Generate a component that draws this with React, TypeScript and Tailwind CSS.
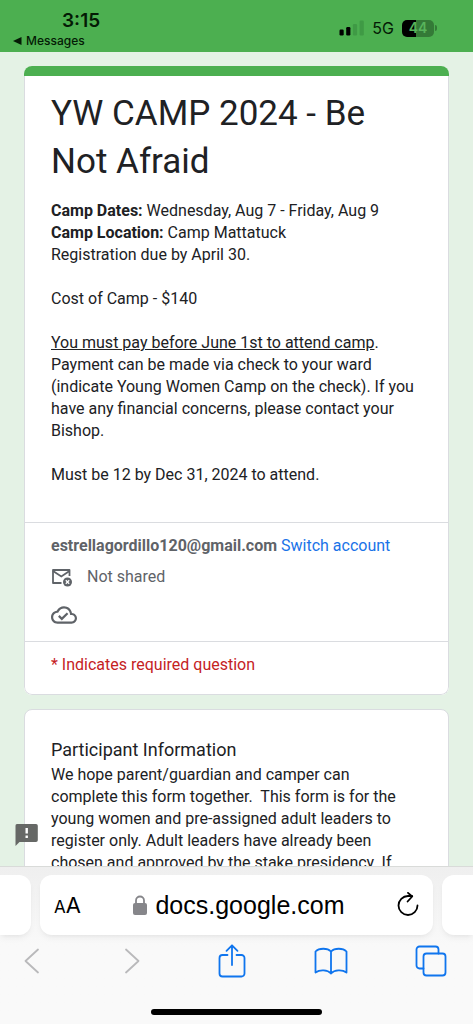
import type { ReactNode } from "react";

/* ==================== STATUS BAR ==================== */
const StatusBar = () => (
  <header className="flex h-[52px] shrink-0 items-start justify-between bg-[#4caf50] px-3 pt-[9px] font-['Inter','Liberation_Sans',sans-serif] text-[#041a05]">
    <div>
      <p className="pl-[50px] text-[19px] leading-6 font-semibold">3:15</p>
      <a href="#messages" className="flex items-center gap-1 text-xs leading-4 font-medium">
        <svg viewBox="0 0 10 10" className="size-2.5" fill="currentColor">
          <path d="M9.5 1v8L1 5z" />
        </svg>
        Messages
      </a>
    </div>

    <div className="flex items-center gap-2 pt-[9px] pr-6">
      <svg viewBox="0 0 25 16" className="h-4 w-[25px]">
        <rect x="0.500" y="9.5" width="4.2" height="6" rx="1.2" fill="#000" />
        <rect x="7.2" y="7" width="4.2" height="8.5" rx="1.2" fill="#000" />
        <rect x="13.9" y="4" width="4.2" height="11.5" rx="1.2" fill="#3f9a45" />
        <rect x="20.6" y="0.5" width="4.2" height="15" rx="1.2" fill="#3f9a45" />
      </svg>
      <span className="text-base leading-5">5G</span>
      <div className="flex items-center">
        <span className="flex h-[17px] w-8 items-center justify-center rounded-[5px] bg-linear-to-r from-black from-45% to-[#347a37] to-45% text-sm leading-4 font-semibold text-[#58b45c]">
          44
        </span>
        <span className="ml-px h-1.5 w-0.5 rounded-r-full bg-[#347a37]" />
      </div>
    </div>
  </header>
);

/* ==================== FORM ==================== */
const Card = ({ children }: { children: ReactNode }) => (
  <section className="overflow-hidden rounded-lg border border-[#dadce0] bg-white">{children}</section>
);

const FormHeader = () => (
  <section className="overflow-hidden rounded-lg bg-white">
    <div className="h-2.5 bg-[#4caf50]" />
    <div className="rounded-b-lg border border-t-0 border-[#dadce0]">
      <div className="px-[26px] pt-3.5 pb-9">
        <h1 className="text-[35px] leading-12">YW CAMP 2024 - Be Not Afraid</h1>
        <div className="mt-3.5 text-base leading-[22px]">
          <p>
            <b>Camp Dates:</b> Wednesday, Aug 7 - Friday, Aug 9
          </p>
          <p>
            <b>Camp Location:</b> Camp Mattatuck
          </p>
          <p>Registration due by April 30.</p>
          <br />
          <p>Cost of Camp - $140</p>
          <br />
          <p>
            <u>You must pay before June 1st to attend camp</u>.
            <br />
            Payment can be made via check to your ward (indicate Young Women Camp on the check). If you
            have any financial concerns, please contact your Bishop.
          </p>
          <br />
          <p>Must be 12 by Dec 31, 2024 to attend.</p>
        </div>
      </div>

      <div className="border-t border-[#dadce0] px-[26px] py-3 text-base leading-[22px] text-[#5f6368]">
        <p>
          <b>estrellagordillo120@gmail.com</b>{" "}
          <a href="#switch" className="text-[#1a73e8]">
            Switch account
          </a>
        </p>
        <div className="mt-[9px] flex items-center gap-3.5">
          <svg viewBox="0 0 22 20" className="h-5 w-[22px]" fill="none" stroke="currentColor" strokeWidth="1.800">
            <path d="M18.500 9V3H2v13h8.500" strokeLinejoin="round" />
            <path d="M2 4l8.300 5.500L18.500 4" />
            <circle cx="16.500" cy="15" r="4.500" fill="currentColor" stroke="none" />
            <path d="M14.800 13.300l3.400 3.400M18.200 13.300l-3.400 3.400" stroke="#fff" strokeWidth="1.300" />
          </svg>
          <span>Not shared</span>
        </div>
        <svg viewBox="0 0 24 24" className="mt-3.5 mb-px size-[26px]" fill="currentColor">
          <path d="M19.35 10.04C18.67 6.59 15.64 4 12 4 9.110 4 6.600 5.640 5.350 8.040 2.340 8.360 0 10.910 0 14c0 3.310 2.690 6 6 6h13c2.760 0 5-2.240 5-5 0-2.640-2.050-4.780-4.650-4.960zM19 18H6c-2.210 0-4-1.790-4-4 0-2.050 1.530-3.760 3.560-3.970l1.070-.11.5-.95C8.080 7.140 9.940 6 12 6c2.620 0 4.880 1.860 5.390 4.430l.3 1.500 1.530.11c1.560.1 2.780 1.410 2.780 2.960 0 1.650-1.350 3-3 3zm-9-3.820l-2.090-2.090L6.500 13.500 10 17l6.010-6.010-1.410-1.410z" />
        </svg>
      </div>

      <p className="border-t border-[#dadce0] px-[26px] pt-3 pb-[18px] text-base leading-[22px] text-[#c5221f]">
        * Indicates required question
      </p>
    </div>
  </section>
);

const ParticipantInfo = () => (
  <Card>
    <div className="py-[26px] pr-9 pl-[26px]">
      <h2 className="text-lg leading-7">Participant Information</h2>
      <p className="text-base leading-[22px]">
        We hope parent/guardian and camper can complete this form together.&nbsp; This form is for the
        young women and pre-assigned adult leaders to register only. Adult leaders have already been
        chosen and approved by the stake presidency. If
      </p>
    </div>
  </Card>
);

/* ==================== BROWSER BAR ==================== */
const iconProps = { fill: "none", stroke: "currentColor", strokeLinecap: "round", strokeLinejoin: "round" } as const;

const BrowserBar = () => (
  <footer className="shrink-0 overflow-hidden border-t border-[#d9dbd9] bg-linear-to-b from-[#efefef] to-[#f9f9f9] to-50% pt-2 pb-[9px] font-['Inter','Liberation_Sans',sans-serif]">
    <div className="flex h-[60px] gap-[9px]">
      <div className="w-[31px] shrink-0 rounded-r-xl bg-white shadow-md shadow-black/5" />
      <div className="flex flex-1 items-center justify-between rounded-xl bg-white px-3.5 shadow-md shadow-black/5">
        <button type="button" aria-label="Page settings" className="flex items-baseline text-black">
          <span className="text-[17px]">A</span>
          <span className="text-[22px]">A</span>
        </button>
        <div className="flex items-center gap-2">
          <svg viewBox="0 0 14 20" className="h-5 w-3.5">
            <rect x="0" y="8" width="14" height="12" rx="2" fill="#86868a" />
            <path d="M3 9V5.500a4 4 0 0 1 8 0V9" fill="none" stroke="#86868a" strokeWidth="1.800" />
          </svg>
          <span className="font-['Liberation_Sans',sans-serif] text-[25px] leading-8 text-black">docs.google.com</span>
        </div>
        <button type="button" aria-label="Reload">
          <svg viewBox="0 0 22 26" className="h-[26px] w-[22px] text-black" {...iconProps} strokeWidth="1.800">
            <path d="M20.500 13.500a9.500 9.500 0 1 1-9.500-9.500h4" />
            <path d="M11 .900L15.200 4.500l-4.600 5" />
          </svg>
        </button>
      </div>
      <div className="w-[31px] shrink-0 rounded-l-xl bg-white shadow-md shadow-black/5" />
    </div>

    <nav className="mt-2 flex h-9 items-center justify-between pr-[25px] pl-[15px] text-[#0f75ee]">
      <button type="button" aria-label="Back" className="flex w-[34px] justify-center text-[#b9b9bb]">
        <svg viewBox="0 0 16 26" className="h-[26px] w-4" {...iconProps} strokeWidth="1.800">
          <path d="M14 1.500L1.500 13 14 24.500" />
        </svg>
      </button>
      <button type="button" aria-label="Forward" className="flex w-[34px] justify-center text-[#b9b9bb]">
        <svg viewBox="0 0 16 26" className="h-[26px] w-4" {...iconProps} strokeWidth="1.800">
          <path d="M2 1.500L14.500 13 2 24.500" />
        </svg>
      </button>
      <button type="button" aria-label="Share" className="flex w-[34px] justify-center">
        <svg viewBox="0 0 28 34" className="h-[34px] w-7" {...iconProps} strokeWidth="1.800">
          <path d="M9.500 11H4.500a3 3 0 0 0-3 3v15.500a3 3 0 0 0 3 3h19a3 3 0 0 0 3-3V14a3 3 0 0 0-3-3h-5" />
          <path d="M14 21V1.500M8.500 6.800L14 1.300l5.500 5.500" />
        </svg>
      </button>
      <button type="button" aria-label="Bookmarks" className="flex w-[34px] justify-center">
        <svg viewBox="0 0 34 28" className="h-7 w-[34px]" {...iconProps} strokeWidth="1.800">
          <path d="M17 4.500v22C13.500 22.800 6 22.300 1.500 25.500V4.500C5 .8 13.500.8 17 4.500C20.500.8 29 .8 32.500 4.500v21C28 22.300 20.500 22.800 17 26.500" />
        </svg>
      </button>
      <button type="button" aria-label="Tabs" className="flex w-[34px] justify-center">
        <svg viewBox="0 0 32 32" className="size-8" {...iconProps} strokeWidth="1.800">
          <path d="M8.500 23.500h-4a3 3 0 0 1-3-3v-16a3 3 0 0 1 3-3h16a3 3 0 0 1 3 3v4" />
          <rect x="8.500" y="8.500" width="22" height="22" rx="3" />
        </svg>
      </button>
    </nav>

    <div className="mx-auto mt-[30px] h-1.5 w-[36%] rounded-full bg-black" />
  </footer>
);

export default function App() {
  return (
    <div className="flex h-screen flex-col bg-[#e4f2e5] font-['Roboto',sans-serif] text-[#202124]">
      <StatusBar />
      <main className="relative min-h-0 flex-1 overflow-hidden">
        <div className="flex flex-col gap-3.5 px-6 pt-3.5">
          <FormHeader />
          <ParticipantInfo />
        </div>
        <button type="button" aria-label="Report a problem" className="absolute bottom-5 left-[15px] text-[#666866]">
          <svg viewBox="0 0 23 22" className="h-[22px] w-[23px]">
            <path d="M2 0h19a1.800 1.800 0 0 1 1.800 1.800v14.400A1.800 1.800 0 0 1 21 18H4.500L.5 22V1.800A1.700 1.700 0 0 1 2 0z" fill="currentColor" />
            <path d="M10.500 4h2.400v5.500h-2.400zM10.500 11.500h2.400v2.400h-2.400z" fill="#fff" />
          </svg>
        </button>
      </main>
      <BrowserBar />
    </div>
  );
}
